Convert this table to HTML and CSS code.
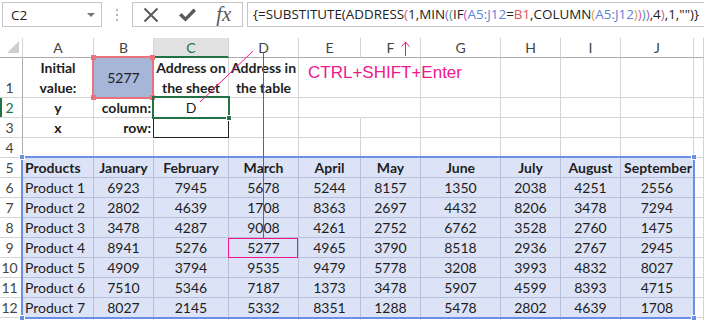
FILE: index.html
```html
<!DOCTYPE html>
<html>
<head>
<meta charset="utf-8">
<link rel="stylesheet" href="styles.css">
</head>
<body>
<div class="app">
  <div class="fbar">
    <div class="namebox"><span>C2</span><span class="caret"></span></div>
    <div class="grip"><i></i><i></i><i></i></div>
    <div class="btns">
      <span class="btn"><svg width="16" height="16" viewBox="0 0 16 16"><path d="M1.5 1.5 L14.5 14.5 M14.5 1.5 L1.5 14.5" stroke="#5a5a5a" stroke-width="2" fill="none"/></svg></span>
      <span class="btn"><svg width="17" height="14" viewBox="0 0 17 14"><polygon points="0,7.5 2.5,5 6.5,9 14.5,0.5 17,3 6.5,13.5" fill="#5a5a5a"/></svg></span>
      <span class="btn fx">fx</span>
    </div>
    <div class="formula">{=SUBSTITUTE(ADDRESS<span class="p1">(</span>1,MIN<span class="p2">(</span><span class="p3">(</span>IF<span class="p4">(</span><span class="rf1">A5:J12</span>=<span class="rf2">B1</span>,COLUMN<span class="p5">(</span><span class="rf1">A5:J12</span><span class="p5">)</span><span class="p4">)</span><span class="p3">)</span><span class="p2">)</span>,4<span class="p1">)</span>,1,"")}</div>
  </div>

  <div class="sheet">
    <!-- column headers -->
    <div class="c h corner"><svg width="12" height="12" viewBox="0 0 12 12"><polygon points="12,0 12,12 0,12" fill="#cfcfcf"/></svg></div>
    <div class="c h">A</div><div class="c h">B</div><div class="c h hs">C</div><div class="c h">D</div><div class="c h">E</div><div class="c h">F</div><div class="c h">G</div><div class="c h">H</div><div class="c h">I</div><div class="c h">J</div><div class="c h"></div>

    <!-- row 1 -->
    <div class="c rh tall">1</div>
    <div class="c b two">Initial<br>value:</div>
    <div class="c b1 mid">5277</div>
    <div class="c b two">Address on<br>the sheet</div>
    <div class="c b two">Address in<br>the table</div>
    <div class="c hint nr">CTRL+SHIFT+Enter</div>
    <div class="c"></div><div class="c"></div><div class="c"></div><div class="c"></div><div class="c"></div><div class="c"></div>

    <!-- row 2 -->
    <div class="c rh rs">2</div>
    <div class="c b">y</div>
    <div class="c b r">column:</div>
    <div class="c">D</div>
    <div class="c"></div><div class="c nr"></div><div class="c"></div><div class="c"></div><div class="c"></div><div class="c"></div><div class="c"></div><div class="c"></div>

    <!-- row 3 -->
    <div class="c rh">3</div>
    <div class="c b">x</div>
    <div class="c b r kr">row:</div>
    <div class="c boxed"></div>
    <div class="c"></div><div class="c"></div><div class="c"></div><div class="c"></div><div class="c"></div><div class="c"></div><div class="c"></div><div class="c"></div>

    <!-- row 4 -->
    <div class="c rh">4</div>
    <div class="c"></div><div class="c"></div><div class="c kb"></div><div class="c"></div><div class="c"></div><div class="c"></div><div class="c"></div><div class="c"></div><div class="c"></div><div class="c"></div><div class="c"></div>

    <!-- row 5 -->
    <div class="c rh">5</div>
    <div class="c t b l">Products</div><div class="c t b">January</div><div class="c t b">February</div><div class="c t b">March</div><div class="c t b">April</div><div class="c t b">May</div><div class="c t b">June</div><div class="c t b">July</div><div class="c t b">August</div><div class="c t b">September</div><div class="c"></div>

    <div class="c rh">6</div>
    <div class="c t l">Product 1</div><div class="c t">6923</div><div class="c t">7945</div><div class="c t">5678</div><div class="c t">5244</div><div class="c t">8157</div><div class="c t">1350</div><div class="c t">2038</div><div class="c t">4251</div><div class="c t">2556</div><div class="c"></div>

    <div class="c rh">7</div>
    <div class="c t l">Product 2</div><div class="c t">2802</div><div class="c t">4639</div><div class="c t">1708</div><div class="c t">8363</div><div class="c t">2697</div><div class="c t">4432</div><div class="c t">8206</div><div class="c t">3478</div><div class="c t">7294</div><div class="c"></div>

    <div class="c rh">8</div>
    <div class="c t l">Product 3</div><div class="c t">3478</div><div class="c t">4287</div><div class="c t">9008</div><div class="c t">4261</div><div class="c t">2752</div><div class="c t">6762</div><div class="c t">3528</div><div class="c t">2760</div><div class="c t">1475</div><div class="c"></div>

    <div class="c rh">9</div>
    <div class="c t l">Product 4</div><div class="c t">8941</div><div class="c t">5276</div><div class="c t">5277</div><div class="c t">4965</div><div class="c t">3790</div><div class="c t">8518</div><div class="c t">2936</div><div class="c t">2767</div><div class="c t">2945</div><div class="c"></div>

    <div class="c rh">10</div>
    <div class="c t l">Product 5</div><div class="c t">4909</div><div class="c t">3794</div><div class="c t">9535</div><div class="c t">9479</div><div class="c t">5778</div><div class="c t">3208</div><div class="c t">3993</div><div class="c t">4832</div><div class="c t">8027</div><div class="c"></div>

    <div class="c rh">11</div>
    <div class="c t l">Product 6</div><div class="c t">7510</div><div class="c t">5346</div><div class="c t">7187</div><div class="c t">1373</div><div class="c t">3478</div><div class="c t">5907</div><div class="c t">4599</div><div class="c t">8393</div><div class="c t">4715</div><div class="c"></div>

    <div class="c rh">12</div>
    <div class="c t l">Product 7</div><div class="c t">8027</div><div class="c t">2145</div><div class="c t">5332</div><div class="c t">8351</div><div class="c t">1288</div><div class="c t">5478</div><div class="c t">2802</div><div class="c t">4639</div><div class="c t">1708</div><div class="c"></div>

    <div class="c rh"></div>
    <div class="c"></div><div class="c"></div><div class="c"></div><div class="c"></div><div class="c"></div><div class="c"></div><div class="c"></div><div class="c"></div><div class="c"></div><div class="c"></div><div class="c"></div>
  </div>

  <!-- selection overlays -->
  <div class="sel sel-ref"><i class="k tl"></i><i class="k tr"></i><i class="k bl"></i><i class="k br"></i></div>
  <div class="sel sel-cur"><i class="fill"></i></div>
  <div class="sel sel-rng"><i class="q tl"></i><i class="q tr"></i><i class="q bl"></i><i class="q br"></i></div>

  <svg class="ink" width="704" height="320" viewBox="0 0 704 320">
    <g stroke="#f0168c" stroke-width="1" fill="none">
      <line x1="253" y1="51" x2="200" y2="102"/>
      <line x1="263.5" y1="52" x2="263.5" y2="238"/>
      <rect x="228.5" y="238.5" width="69" height="19"/>
      <line x1="405.5" y1="42" x2="405.5" y2="56"/>
      <polyline points="401.5,46.5 405.5,42 409.5,46.5"/>
    </g>
  </svg>
</div>
</body>
</html>
```

FILE: styles.css
```css
* { box-sizing: border-box; }

body {
  margin: 0;
  background: #fff;
  font-family: Lato, "Open Sans", sans-serif;
}

.app {
  position: relative;
  width: 704px;
  height: 320px;
  overflow: hidden;
}

/* formula bar */
.fbar {
  display: flex;
  align-items: flex-start;
  height: 38px;
  padding: 2px 0 0 2px;
}

.namebox {
  width: 100px;
  height: 25px;
  border: 1px solid #c6c6c6;
  display: flex;
  align-items: center;
  justify-content: space-between;
  padding: 0 6px 0 8px;
  font-family: "Open Sans", sans-serif;
  font-size: 13.5px;
  color: #222;
}

.caret {
  width: 0;
  height: 0;
  border-left: 4px solid transparent;
  border-right: 4px solid transparent;
  border-top: 4px solid #777;
}

.grip {
  width: 30px;
  height: 25px;
  display: flex;
  flex-direction: column;
  align-items: center;
  justify-content: center;
  gap: 3px;
}

.grip i {
  display: block;
  width: 2px;
  height: 2px;
  background: #b5b5b5;
}

.btns {
  width: 111px;
  height: 25px;
  border: 1px solid #c6c6c6;
  display: flex;
  align-items: center;
}

.btn {
  width: 37px;
  display: flex;
  justify-content: center;
  align-items: center;
}

.fx {
  font-family: "Liberation Serif", serif;
  font-style: italic;
  font-size: 21px;
  color: #5a5a5a;
  line-height: 23px;
}

.formula {
  flex: 1;
  height: 25px;
  margin-left: 4px;
  border: 1px solid #c6c6c6;
  border-right: none;
  padding-left: 5px;
  font-family: "Open Sans", sans-serif;
  font-size: 13.4px;
  line-height: 23px;
  color: #222;
  white-space: nowrap;
  overflow: hidden;
}

.p1 { color: #e2587a; }
.p2 { color: #9d62c8; }
.p3 { color: #3aa57e; }
.p4 { color: #c655c0; }
.p5 { color: #e59a3a; }
.rf1 { color: #5b83d6; }
.rf2 { color: #e0515a; }

/* sheet grid */
.sheet {
  display: grid;
  grid-template-columns: 23px 71px 60px 75px 70px 62px 60px 80px 60px 60px 73px 10px;
  grid-template-rows: 20px 40px repeat(12, 20px);
}

.c {
  border-right: 1px solid #d4d4d4;
  border-bottom: 1px solid #d4d4d4;
  font-size: 14px;
  line-height: 19px;
  padding: 0 3px;
  white-space: nowrap;
  text-align: center;
  color: #1e1e1e;
}

.h {
  border-bottom-color: #ababab;
  color: #444;
}

.hs {
  background: #e1e1e1;
  color: #217346;
  border-bottom: 2px solid #217346;
}

.corner {
  display: flex;
  align-items: flex-end;
  justify-content: flex-end;
  padding: 0 3px 4px 0;
}

.rh {
  border-right-color: #ababab;
  color: #444;
  padding: 0 3px 0 0;
}

.rs {
  color: #217346;
  box-shadow: inset 2px 0 0 #217346;
}

.tall { padding-top: 20px; }

.b { font-weight: 700; }
.l { text-align: left; padding-left: 2px; }
.r { text-align: right; padding-right: 2px; }

.two {
  line-height: 20px;
  white-space: normal;
  padding: 0;
}

.mid { line-height: 39px; }

.b1 { background: #a6b6d9; }

.hint {
  text-align: left;
  padding: 5px 0 0 9px;
  font-family: "Liberation Sans", Arial, sans-serif;
  font-size: 17px;
  line-height: 20px;
  color: #f0168c;
  overflow: visible;
}

.nr { border-right-color: transparent; }

.kr { border-right-color: #222; }
.boxed { border-right-color: #222; border-bottom-color: #222; }
.kb { border-bottom-color: #d4d4d4; }

.t {
  background: #dde3f6;
  border-right-color: #b7bfda;
  border-bottom-color: #b7bfda;
}

/* selection overlays */
.sel {
  position: absolute;
  pointer-events: none;
}

.sel-ref {
  left: 92px;
  top: 56px;
  width: 62px;
  height: 43px;
  border: 2px solid #e8737b;
}

.k {
  position: absolute;
  width: 5px;
  height: 5px;
  background: #e8737b;
}

.k.tl { left: -3px; top: -3px; }
.k.tr { right: -3px; top: -3px; }
.k.bl { left: -3px; bottom: -3px; }
.k.br { right: -3px; bottom: -3px; }

.sel-cur {
  left: 152px;
  top: 96px;
  width: 78px;
  height: 23px;
  border: 2px solid #217346;
}

.fill {
  position: absolute;
  right: -4px;
  bottom: -4px;
  width: 6px;
  height: 6px;
  background: #217346;
  border: 1px solid #fff;
}

.sel-rng {
  left: 21px;
  top: 156px;
  width: 674px;
  height: 163px;
  border: 2px solid #6b8fe4;
}

.q {
  position: absolute;
  width: 6px;
  height: 6px;
  background: #6b8fe4;
  border: 1px solid #fff;
}

.q.tl { left: -4px; top: -4px; }
.q.tr { right: -4px; top: -4px; }
.q.bl { left: -4px; bottom: -4px; }
.q.br { right: -4px; bottom: -4px; }

.ink {
  position: absolute;
  left: 0;
  top: 0;
  pointer-events: none;
}
```
